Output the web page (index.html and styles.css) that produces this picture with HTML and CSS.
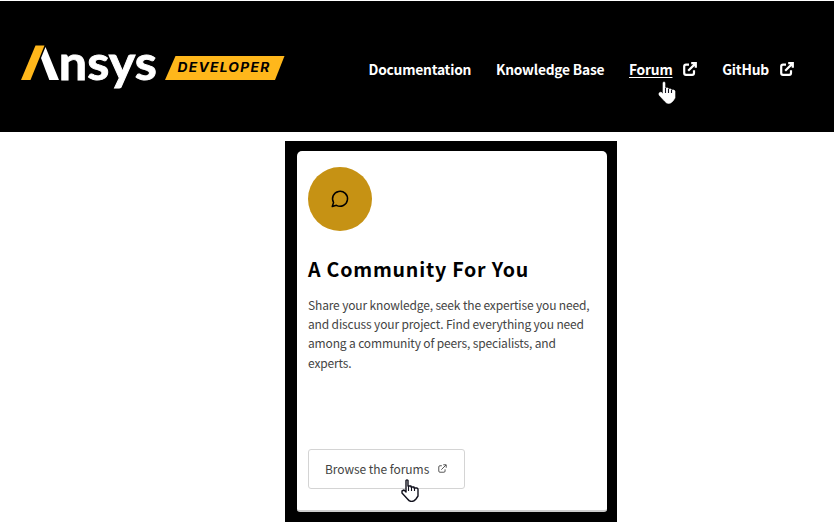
FILE: index.html
```html
<!DOCTYPE html>
<html lang="en">
<head>
<meta charset="utf-8">
<title>Ansys Developer</title>
<link rel="stylesheet" href="styles.css">
</head>
<body>
<svg class="defs" width="0" height="0" aria-hidden="true">
  <symbol id="external" viewBox="0 0 14 14">
    <path d="M6 2.7H3Q1.2 2.7 1.2 4.5V11Q1.2 12.8 3 12.8H9.2Q11 12.8 11 11V8.3M5.2 8.8L12.4 1.6M8.2 1.2H12.8V5.8" fill="none" stroke="currentColor"/>
  </symbol>
  <symbol id="hand" viewBox="0 0 18 23">
    <path d="M5 1.5Q6 .3 7 1.5V7H10V8H13V9H16L17 10V17L15 20Q10.500 25 6.500 20L1 14V12L3 11L5 13Z" stroke-linejoin="round"/>
    <path class="fingers" d="M7.5 7V12M10.500 8V12M13.500 9V12" fill="none"/>
  </symbol>
</svg>
<header class="header">
  <svg class="logo" width="266" height="70" viewBox="20 32 266 70" role="img" aria-label="Ansys Developer">
    <path d="M35.500 45.500H44.500L30.500 80H21Z" fill="#ffb71b"/>
    <path d="M45.500 47L59 80H49.300L41 58Z" fill="#fff"/>
    <text class="brand" x="58.800" y="79.500" textLength="98" lengthAdjust="spacingAndGlyphs">nsys</text>
    <path d="M175.500 56H284.500L275 80H165Z" fill="#ffb71b"/>
    <text class="product" x="177.500" y="72.200" textLength="93" lengthAdjust="spacingAndGlyphs">DEVELOPER</text>
  </svg>
  <nav class="nav">
    <a class="link">Documentation</a>
    <a class="link">Knowledge Base</a>
    <a class="link"><span class="current">Forum</span><svg class="ext"><use href="#external"/></svg><svg class="hand light"><use href="#hand"/></svg></a>
    <a class="link">GitHub<svg class="ext"><use href="#external"/></svg></a>
  </nav>
</header>
<main class="frame">
  <section class="card">
    <div class="badge">
      <svg width="20" height="20" viewBox="0 0 24 24" fill="none" stroke="#000" stroke-width="1.8" stroke-linejoin="round"><path d="M2.700 21L4.300 16.300A9 9 0 1 1 7.700 19.600Z"/></svg>
    </div>
    <h2 class="title">A Community For You</h2>
    <p class="copy">Share your knowledge, seek the expertise you need,<br>and discuss your project. Find everything you need<br>among a community of peers, specialists, and<br>experts.</p>
    <a class="button">Browse the forums<svg class="ext small"><use href="#external"/></svg><svg class="hand dark"><use href="#hand"/></svg></a>
  </section>
</main>
</body>
</html>
```
FILE: styles.css
```css
* { box-sizing: border-box; }
body { margin: 0; width: 834px; height: 522px; overflow: hidden; background: #fff; font-family: "Noto Sans CJK SC", sans-serif; }
.defs { display: block; height: 0; }
.header { display: flex; height: 131px; margin-top: 1px; padding-left: 20px; background: #000; }
.logo { flex: none; margin-top: 31px; }
.brand { font: bold 47px "Lato", sans-serif; fill: #fff; stroke: #fff; stroke-width: .9px; }
.product { font: italic bold 12.8px "Inter", sans-serif; letter-spacing: 1.2px; fill: #000; }
.nav { display: flex; margin: 56px 0 0 82.5px; height: 24px; color: #fff; font-size: 13.8px; font-weight: 700; letter-spacing: -.22px; line-height: 25px; white-space: nowrap; }
.link { display: flex; position: relative; margin-right: 24.7px; }
.current { text-decoration: underline; text-underline-offset: 2px; text-decoration-thickness: 1px; }
.ext { width: 14px; height: 14px; margin: 5px 0 0 11px; stroke-width: 2.2; }
.hand { position: absolute; width: 18px; height: 23px; stroke-width: 1.4; }
.light { left: 29px; top: 24px; fill: #fff; stroke: #fff; stroke-width: .6; }
.fingers { stroke: #10101c; stroke-width: 1.1; }
.dark { left: 92px; top: 29px; fill: #fff; stroke: #10101c; }
.frame { width: 332px; height: 381px; margin: 9px 0 0 285px; padding: 10px 10px 10px 12px; background: #000; }
.card { width: 310px; height: 361px; padding: 16px 11px; border-bottom: 2px solid #ccc; border-radius: 5px 5px 3px 3px; background: #fff; }
.badge { display: flex; align-items: center; justify-content: center; width: 64px; height: 64px; border-radius: 50%; background: #c69214; }
.title { margin: 22px 0 0; font-size: 19.6px; line-height: 32px; letter-spacing: .78px; white-space: nowrap; }
.copy { margin: 9.5px 0 0; height: 78px; color: #444; font-size: 12px; letter-spacing: -.15px; line-height: 19.4px; white-space: nowrap; }
.button { display: flex; position: relative; width: 157px; height: 40px; margin-top: 76.5px; padding-left: 16px; border: 1px solid #d4d4d4; border-radius: 3px; color: #444; font-size: 12px; letter-spacing: -.05px; line-height: 38px; white-space: nowrap; }
.small { width: 9px; height: 9px; margin: 14px 0 0 9px; stroke-width: 1.4; }
```
